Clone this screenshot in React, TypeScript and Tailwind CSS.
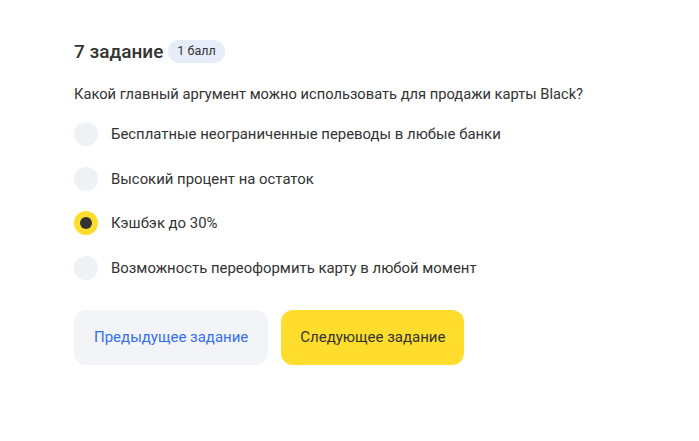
import React from "react";

const options = [
  "Бесплатные неограниченные переводы в любые банки",
  "Высокий процент на остаток",
  "Кэшбэк до 30%",
  "Возможность переоформить карту в любой момент",
];

export default function App() {
  const selected = 2;
  return (
    <div
      className="w-[699px] h-[441px] bg-white text-[#333333] pl-[74px] pt-[38px]"
      style={{ fontFamily: "Roboto, 'Noto Sans', sans-serif" }}
    >
      <div className="flex items-center gap-[5px] h-[26px]">
        <span className="text-[19px] font-medium text-[#333333] leading-none">7 задание</span>
        <span className="h-[23px] px-[9px] rounded-full bg-[#e7edf8] text-[12.5px] text-[#333333] flex items-center">
          1 балл
        </span>
      </div>
      <div className="mt-[20px] text-[14.7px] leading-[20px]">
        Какой главный аргумент можно использовать для продажи карты Black?
      </div>
      <div className="mt-[18px] flex flex-col gap-[20.5px]">
        {options.map((o, i) => (
          <div key={i} className="flex items-center gap-[13px] h-[24px]">
            {i === selected ? (
              <span className="w-[24px] h-[24px] rounded-full bg-[#ffdd2d] flex items-center justify-center">
                <span className="w-[12px] h-[12px] rounded-full bg-[#333333]" />
              </span>
            ) : (
              <span className="w-[24px] h-[24px] rounded-full bg-[#eff1f5]" />
            )}
            <span className="text-[14.9px] leading-[20px]">{o}</span>
          </div>
        ))}
      </div>
      <div className="mt-[30px] flex gap-[13px]">
        <button className="h-[55px] px-[20px] rounded-[12px] bg-[#f3f4f8] text-[#336fee] text-[15px]">
          Предыдущее задание
        </button>
        <button className="h-[55px] px-[19px] rounded-[12px] bg-[#ffdd2d] text-[#333333] text-[15px]">
          Следующее задание
        </button>
      </div>
    </div>
  );
}
